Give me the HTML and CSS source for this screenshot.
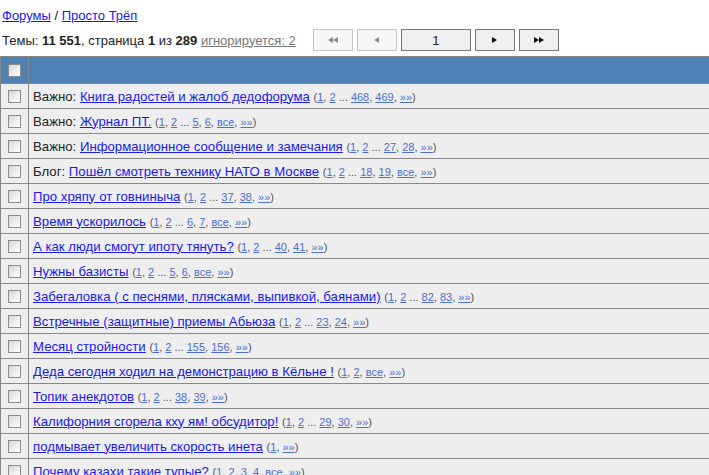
FILE: index.html
```html
<!DOCTYPE html>
<html lang="ru">
<head>
<meta charset="utf-8">
<title>Просто Трёп</title>
<link rel="stylesheet" href="styles.css">
</head>
<body>
<div class="crumbs"><a href="#">Форумы</a> / <a href="#">Просто Трёп</a></div>
<div class="info">
  <span class="stats">Темы: <b>11 551</b>, страница <b>1</b> из <b>289</b> <a class="ignored" href="#">игнорируется: 2</a></span>
  <div class="pager">
    <button class="pbtn off"><svg width="10" height="6" viewBox="0 0 10 6"><path d="M5 0L0 3L5 6Z M10 0L5 3L10 6Z" fill="#8a8a8a"/></svg></button>
    <button class="pbtn off"><svg width="5" height="6" viewBox="0 0 5 6"><path d="M5 0L0 3L5 6Z" fill="#8a8a8a"/></svg></button>
    <button class="pbtn page">1</button>
    <button class="pbtn"><svg width="5" height="6" viewBox="0 0 5 6"><path d="M0 0L5 3L0 6Z" fill="#111"/></svg></button>
    <button class="pbtn"><svg width="10" height="6" viewBox="0 0 10 6"><path d="M0 0L5 3L0 6Z M5 0L10 3L5 6Z" fill="#111"/></svg></button>
  </div>
</div>
<table class="topics">
  <thead>
    <tr><th class="sel"><input type="checkbox"></th><th></th></tr>
  </thead>
  <tbody>
    <tr><td class="sel"><input type="checkbox"></td><td>Важно: <a href="#">Книга радостей и жалоб дедофорума</a> <span class="pages">(<a href="#">1</a>, <a href="#">2</a> ... <a href="#">468</a>, <a href="#">469</a>, <a href="#">»»</a>)</span></td></tr>
    <tr><td class="sel"><input type="checkbox"></td><td>Важно: <a href="#">Журнал ПТ.</a> <span class="pages">(<a href="#">1</a>, <a href="#">2</a> ... <a href="#">5</a>, <a href="#">6</a>, <a href="#">все</a>, <a href="#">»»</a>)</span></td></tr>
    <tr><td class="sel"><input type="checkbox"></td><td>Важно: <a href="#">Информационное сообщение и замечания</a> <span class="pages">(<a href="#">1</a>, <a href="#">2</a> ... <a href="#">27</a>, <a href="#">28</a>, <a href="#">»»</a>)</span></td></tr>
    <tr><td class="sel"><input type="checkbox"></td><td>Блог: <a href="#">Пошёл смотреть технику НАТО в Москве</a> <span class="pages">(<a href="#">1</a>, <a href="#">2</a> ... <a href="#">18</a>, <a href="#">19</a>, <a href="#">все</a>, <a href="#">»»</a>)</span></td></tr>
    <tr><td class="sel"><input type="checkbox"></td><td><a href="#">Про хряпу от говниныча</a> <span class="pages">(<a href="#">1</a>, <a href="#">2</a> ... <a href="#">37</a>, <a href="#">38</a>, <a href="#">»»</a>)</span></td></tr>
    <tr><td class="sel"><input type="checkbox"></td><td><a href="#">Время ускорилось</a> <span class="pages">(<a href="#">1</a>, <a href="#">2</a> ... <a href="#">6</a>, <a href="#">7</a>, <a href="#">все</a>, <a href="#">»»</a>)</span></td></tr>
    <tr><td class="sel"><input type="checkbox"></td><td><a href="#">А как люди смогут ипоту тянуть?</a> <span class="pages">(<a href="#">1</a>, <a href="#">2</a> ... <a href="#">40</a>, <a href="#">41</a>, <a href="#">»»</a>)</span></td></tr>
    <tr><td class="sel"><input type="checkbox"></td><td><a href="#">Нужны базисты</a> <span class="pages">(<a href="#">1</a>, <a href="#">2</a> ... <a href="#">5</a>, <a href="#">6</a>, <a href="#">все</a>, <a href="#">»»</a>)</span></td></tr>
    <tr><td class="sel"><input type="checkbox"></td><td><a href="#">Забегаловка ( с песнями, плясками, выпивкой, баянами)</a> <span class="pages">(<a href="#">1</a>, <a href="#">2</a> ... <a href="#">82</a>, <a href="#">83</a>, <a href="#">»»</a>)</span></td></tr>
    <tr><td class="sel"><input type="checkbox"></td><td><a href="#">Встречные (защитные) приемы Абьюза</a> <span class="pages">(<a href="#">1</a>, <a href="#">2</a> ... <a href="#">23</a>, <a href="#">24</a>, <a href="#">»»</a>)</span></td></tr>
    <tr><td class="sel"><input type="checkbox"></td><td><a href="#">Месяц стройности</a> <span class="pages">(<a href="#">1</a>, <a href="#">2</a> ... <a href="#">155</a>, <a href="#">156</a>, <a href="#">»»</a>)</span></td></tr>
    <tr><td class="sel"><input type="checkbox"></td><td><a href="#">Деда сегодня ходил на демонстрацию в Кёльне !</a> <span class="pages">(<a href="#">1</a>, <a href="#">2</a>, <a href="#">все</a>, <a href="#">»»</a>)</span></td></tr>
    <tr><td class="sel"><input type="checkbox"></td><td><a href="#">Топик анекдотов</a> <span class="pages">(<a href="#">1</a>, <a href="#">2</a> ... <a href="#">38</a>, <a href="#">39</a>, <a href="#">»»</a>)</span></td></tr>
    <tr><td class="sel"><input type="checkbox"></td><td><a href="#">Калифорния сгорела кху ям! обсудитор!</a> <span class="pages">(<a href="#">1</a>, <a href="#">2</a> ... <a href="#">29</a>, <a href="#">30</a>, <a href="#">»»</a>)</span></td></tr>
    <tr><td class="sel"><input type="checkbox"></td><td><a href="#">подмывает увеличить скорость инета</a> <span class="pages">(<a href="#">1</a>, <a href="#">»»</a>)</span></td></tr>
    <tr><td class="sel"><input type="checkbox"></td><td><a href="#">Почему казахи такие тупые?</a> <span class="pages">(<a href="#">1</a>, <a href="#">2</a>, <a href="#">3</a>, <a href="#">4</a>, <a href="#">все</a>, <a href="#">»»</a>)</span></td></tr>
  </tbody>
</table>
</body>
</html>
```
FILE: styles.css
```css
html, body {
  margin: 0;
  padding: 0;
  background: #fff;
}

body {
  font-family: "Liberation Sans", Arial, sans-serif;
  font-size: 13px;
  color: #222;
}

a {
  color: #1a1aee;
}

.crumbs {
  padding: 8px 2px 0;
  height: 17px;
  line-height: 16px;
}

.info {
  display: flex;
  align-items: center;
  padding: 0 2px;
  margin-top: 4px;
  height: 22px;
}

.stats {
  margin-right: 17px;
}

.stats b {
  color: #222;
}

.ignored {
  color: #777;
}

.pager {
  display: flex;
  gap: 4px;
}

.pbtn {
  width: 40px;
  height: 22px;
  padding: 0;
  display: flex;
  align-items: center;
  justify-content: center;
  background: #efefef;
  border: 1px solid #777;
  border-radius: 0;
  font-family: "Liberation Sans", Arial, sans-serif;
  font-size: 13px;
  color: #222;
}

.pbtn.off {
  background: #f7f7f7;
  border-color: #c4c4c4;
}

.pbtn.page {
  width: 70px;
}

.topics {
  margin-top: 5px;
  width: 100%;
  border-collapse: collapse;
  border-left: 1px solid #888;
}

.topics th,
.topics td {
  border-top: 1px solid #888;
  border-bottom: 1px solid #888;
  height: 24px;
  padding: 0 0 0 4px;
  text-align: left;
  white-space: nowrap;
  font-size: 13.2px;
}

.topics th {
  height: 26px;
  background: #4f81b5;
}

.topics td {
  background: #eeeeee;
}

.topics .sel {
  width: 27px;
  padding: 0;
  text-align: center;
  border-right: 1px solid #888;
}

.topics input[type="checkbox"] {
  appearance: none;
  -webkit-appearance: none;
  display: block;
  margin: 0 auto;
  width: 13px;
  height: 13px;
  border: 1px solid #8c8c8c;
  background: linear-gradient(135deg, #d6d6d6 0%, #f4f4f4 70%, #ffffff 100%);
  box-sizing: border-box;
}

.pages {
  font-size: 11px;
  color: #555;
}

.pages a {
  color: #4d70cf;
}
```
